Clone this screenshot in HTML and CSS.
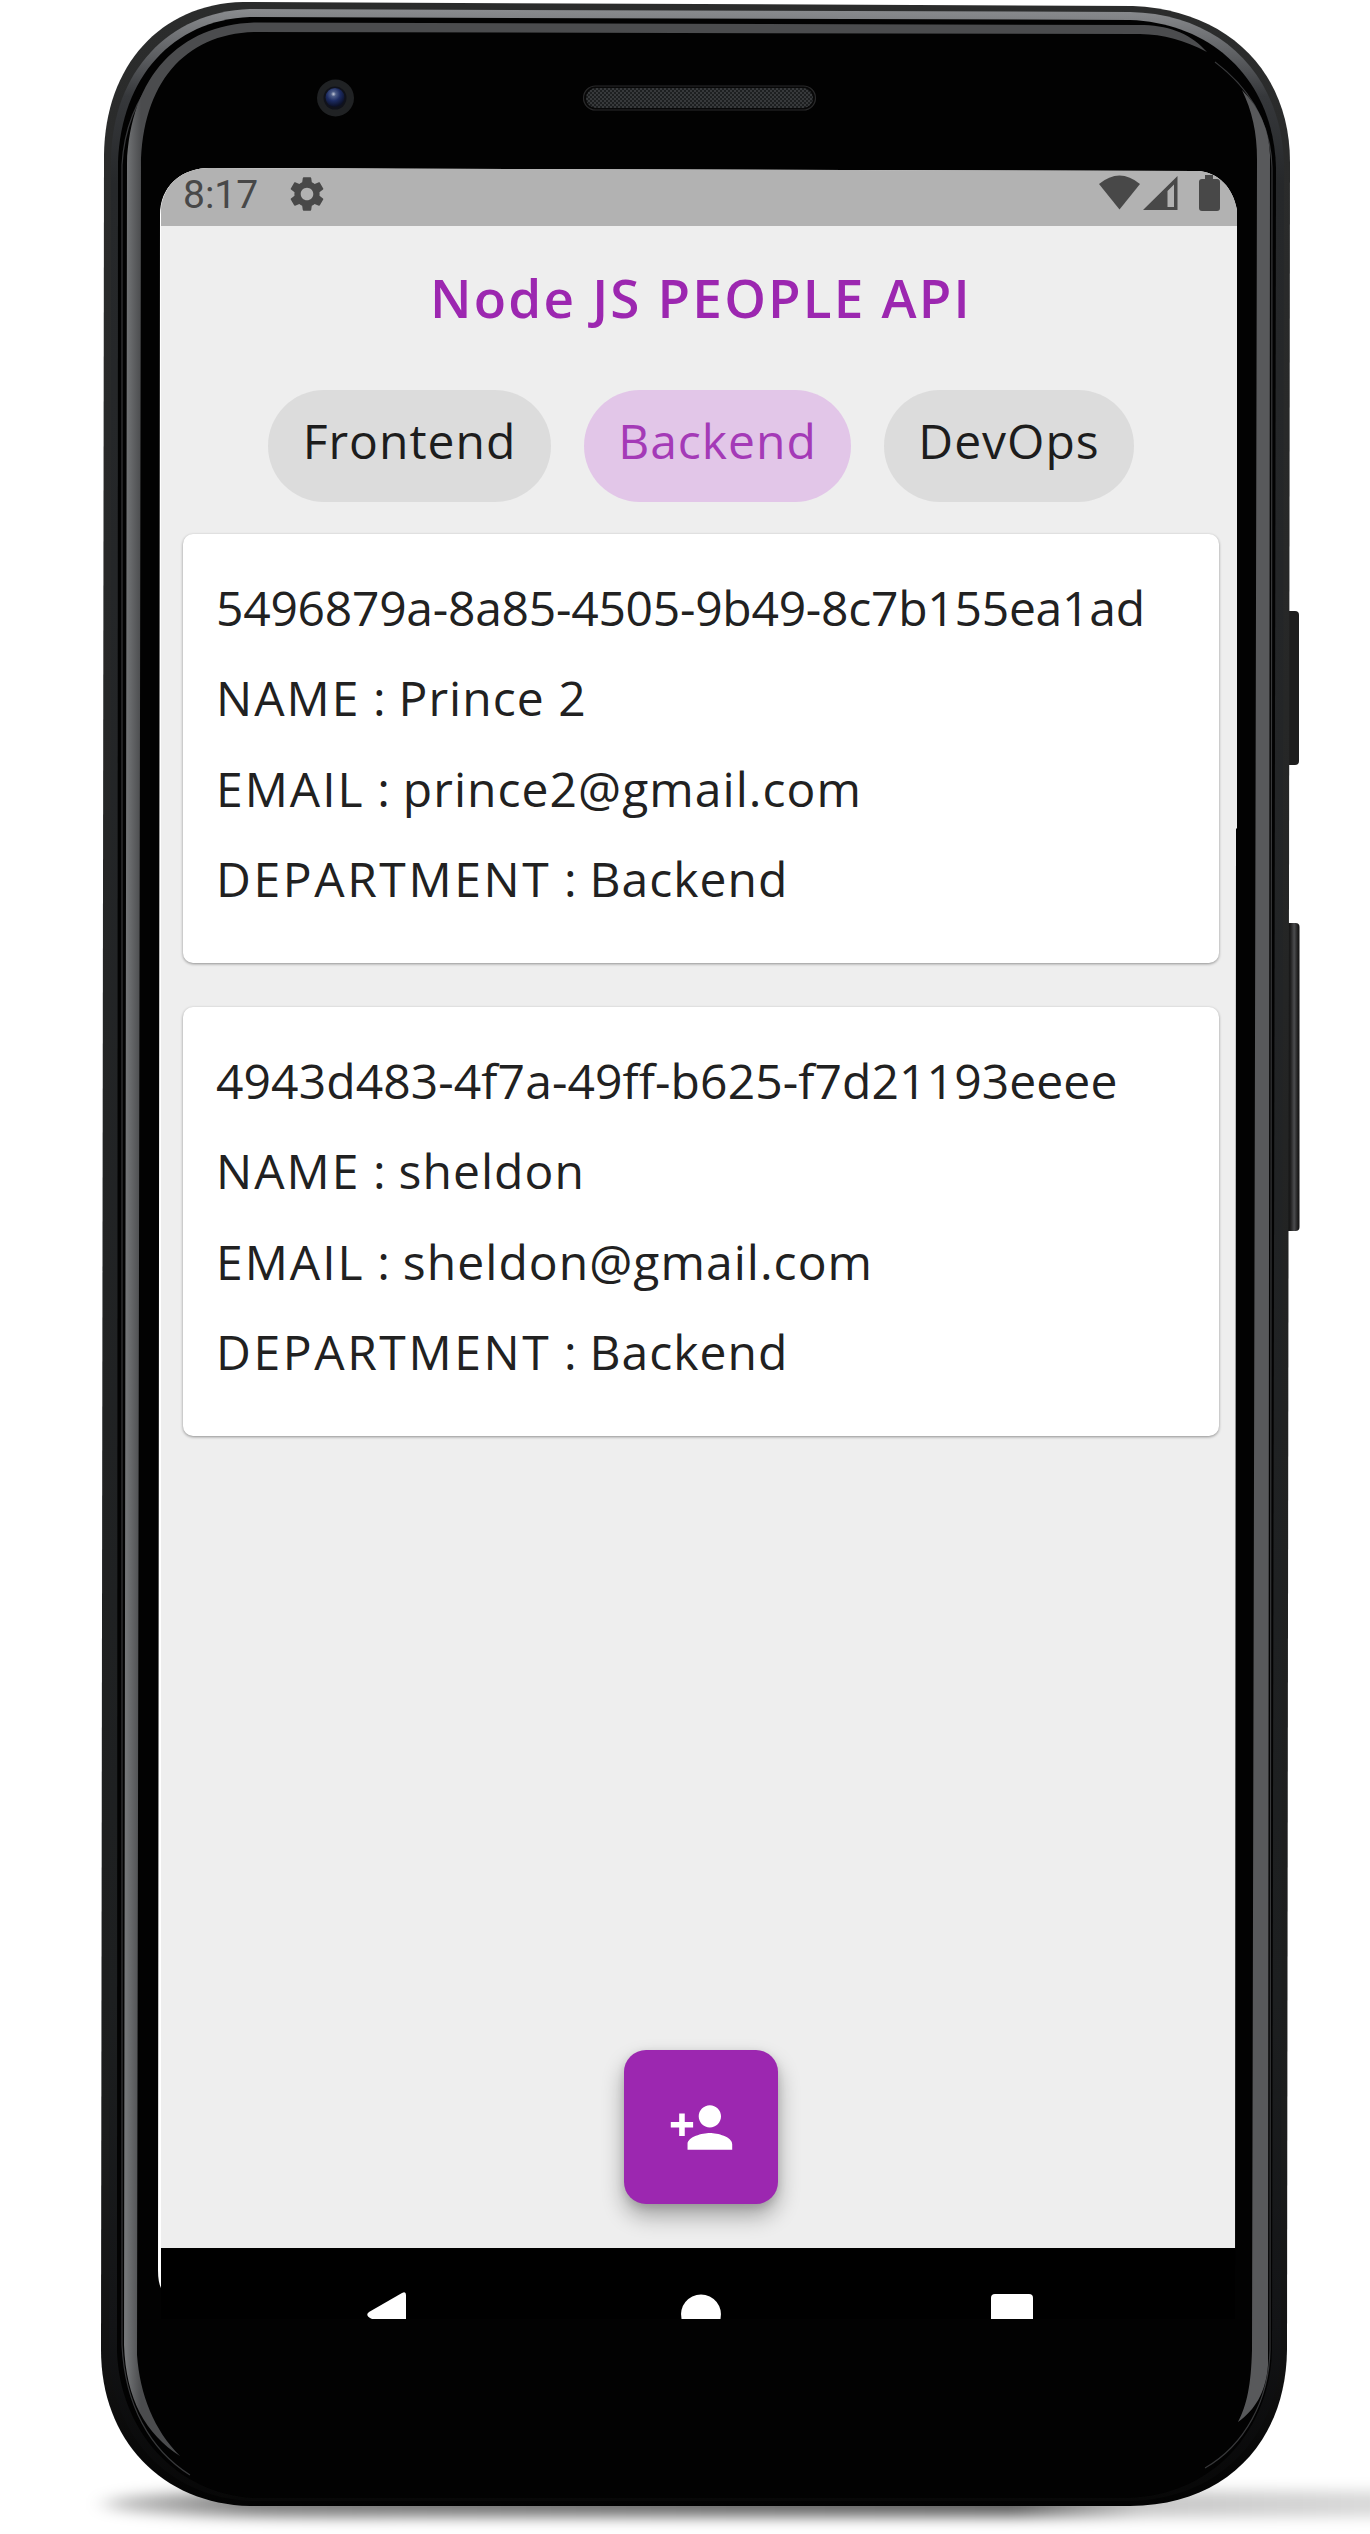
FILE: index.html
```html
<!DOCTYPE html>
<html lang="en">
<head>
<meta charset="utf-8">
<title>Node JS People API</title>
<link rel="stylesheet" href="styles.css">
</head>
<body>
<div class="stage">
  <svg class="device" viewBox="0 0 1370 2534" aria-hidden="true">
    <defs>
      <linearGradient id="rim" x1="0" y1="9" x2="0" y2="2500" gradientUnits="userSpaceOnUse">
        <stop offset="0" stop-color="#8a8c8f"/><stop offset=".012" stop-color="#6d6f72"/><stop offset=".035" stop-color="#36383b"/><stop offset=".07" stop-color="#26282a"/><stop offset=".8" stop-color="#1d1f20"/><stop offset=".93" stop-color="#131416"/><stop offset="1" stop-color="#070707"/>
      </linearGradient>
      <linearGradient id="shell" x1="0" y1="0" x2="0" y2="2506" gradientUnits="userSpaceOnUse">
        <stop offset="0" stop-color="#2b2c2c"/><stop offset=".85" stop-color="#1c1d1d"/><stop offset=".95" stop-color="#101010"/><stop offset="1" stop-color="#020202"/>
      </linearGradient>
      <linearGradient id="edge" x1="126" y1="0" x2="141" y2="0" gradientUnits="userSpaceOnUse">
        <stop offset="0" stop-color="#747678"/><stop offset="1" stop-color="#4b4c4e"/>
      </linearGradient>
      <linearGradient id="key" x1="1287" y1="0" x2="1299" y2="0" gradientUnits="userSpaceOnUse">
        <stop offset="0" stop-color="#080808"/><stop offset=".3" stop-color="#202020"/><stop offset=".6" stop-color="#4b4c4e"/><stop offset=".85" stop-color="#252525"/><stop offset="1" stop-color="#151515"/>
      </linearGradient>
      <radialGradient id="lens" cx=".42" cy=".32" r=".65">
        <stop offset="0" stop-color="#c5cad8"/><stop offset=".2" stop-color="#4c5c87"/><stop offset=".55" stop-color="#1c2b62"/><stop offset="1" stop-color="#0c1128"/>
      </radialGradient>
      <linearGradient id="ground" x1="100" y1="0" x2="1370" y2="0" gradientUnits="userSpaceOnUse">
        <stop offset="0" stop-color="#000" stop-opacity=".22"/><stop offset=".12" stop-color="#000" stop-opacity=".5"/><stop offset=".72" stop-color="#000" stop-opacity=".62"/><stop offset=".82" stop-color="#000" stop-opacity=".22"/><stop offset="1" stop-color="#000" stop-opacity=".15"/>
      </linearGradient>
      <filter id="soft" x="-5%" y="-150%" width="110%" height="400%"><feGaussianBlur stdDeviation="10 7"/></filter>
      <pattern id="mesh" width="4" height="4" patternUnits="userSpaceOnUse"><path d="M0 0h2v2H0zM2 2h2v2H2z" fill="#37393b"/></pattern>
    </defs>
    <path d="M102 2504Q115 2491 300 2491H1400V2517H400Q120 2519 102 2504Z" fill="url(#ground)" filter="url(#soft)"/>
    <rect x="1284" y="611" width="15" height="154" rx="4" fill="#1d1d1d"/>
    <rect x="1284" y="923" width="15.500" height="308" rx="4" fill="url(#key)"/>
    <path d="M243 2L1133 6C1228 10 1290 72 1290 162L1287 2350C1286 2440 1228 2505 1130 2506H250C162 2504 101 2440 101 2350L104 155C105 66 160 4 243 2Z" fill="url(#shell)"/>
    <path d="M250 9L1130 12C1222 14 1282 76 1284 165L1281 2350C1279 2435 1220 2500 1128 2501H252C168 2498 110 2435 109 2350L111 158C113 72 168 12 250 9Z" fill="url(#rim)"/>
    <path d="M250 17L1130 20C1214 23 1274 82 1276 168L1272 2350C1270 2428 1215 2496 1126 2498H254C176 2494 119 2430 117 2350L118 162C121 78 172 20 250 17Z" fill="#020202"/>
    <path d="M122 2345V165C124 130 135 100 158 74M1215 62C1252 90 1271 125 1272 168L1270 2350C1269 2400 1245 2445 1205 2468M122 2345C125 2405 150 2450 190 2475" fill="none" stroke="#37383a" stroke-width="1.200"/>
    <path d="M124 2345L127 164C130 76 180 25 254 22.500L1144 25C1172 26 1192 35 1207 52C1184 40 1164 34.500 1140 34L254 32C184 34 142 84 141 166L137 2355C140 2395 154 2430 180 2456C146 2434 126 2400 124 2345Z" fill="url(#edge)"/>
    <path d="M1242 90C1260 108 1269 130 1270 155L1268 2365C1266 2392 1255 2410 1238 2422C1247 2405 1251 2385 1252 2350L1257 160C1257 132 1252 111 1242 90Z" fill="#58595b"/>
    <path d="M160 215C160 187 180 168 212 168L400 169V2248H161V2288Q158 2282 158 2270Z" fill="#fff"/>
    <circle cx="335.500" cy="98" r="18.500" fill="#202224"/>
    <circle cx="335" cy="98" r="11.500" fill="#10121b"/>
    <circle cx="335" cy="97.500" r="9.500" fill="url(#lens)"/>
    <rect x="583.500" y="86" width="232" height="24" rx="12" fill="#080808" stroke="#29292a" stroke-width="1.200"/>
    <rect x="586" y="88" width="227" height="20" rx="10" fill="#1d1f20"/>
    <rect x="586" y="88" width="227" height="20" rx="10" fill="url(#mesh)"/>
  </svg>

  <main class="screen">
    <header class="status">
      <span class="clock">8:17</span>
      <svg class="gear" viewBox="0 0 24 24"><path d="M19.140 12.940c.04-.3.060-.61.060-.94 0-.32-.02-.64-.07-.94l2.030-1.580c.18-.14.230-.41.120-.61l-1.920-3.320c-.12-.22-.37-.29-.59-.22l-2.390.960c-.5-.38-1.030-.7-1.620-.94L14.400 2.810c-.04-.24-.24-.41-.48-.41h-3.840c-.24 0-.43.170-.47.410L9.250 5.350c-.59.240-1.130.570-1.620.940l-2.390-.96c-.22-.08-.47 0-.59.220L2.740 8.870c-.12.210-.08.470.120.610l2.030 1.580c-.05.3-.09.630-.09.940s.020.640.070.940l-2.030 1.580c-.18.140-.23.410-.12.610l1.920 3.320c.12.220.370.290.590.220l2.390-.96c.5.380 1.030.7 1.620.940l.36 2.540c.05.240.240.410.480.410h3.840c.24 0 .44-.17.470-.41l.36-2.540c.59-.24 1.130-.56 1.620-.94l2.390.960c.22.080.470 0 .59-.22l1.920-3.320c.12-.22.070-.47-.12-.61l-2.010-1.580zM12 15.600c-1.980 0-3.600-1.620-3.600-3.600s1.620-3.600 3.600-3.600 3.600 1.620 3.600 3.600-1.620 3.600-3.600 3.600z"/></svg>
      <svg class="signals" viewBox="0 0 121 37">
        <path d="M0 9Q20.500-8 41 9L20.500 34.500Z"/>
        <path fill-rule="evenodd" d="M44 35L78.500 1V35ZM68.500 16V32H75V9.500Z"/>
        <path d="M106 0h8v4h4q3 0 3 3v26q0 3-3 3h-15q-3 0-3-3V7q0-3 3-3h3Z"/>
      </svg>
    </header>

    <h1 class="title">Node JS PEOPLE API</h1>

    <nav class="chips">
      <button class="chip front">Frontend</button>
      <button class="chip back selected">Backend</button>
      <button class="chip ops">DevOps</button>
    </nav>

    <section class="people">
      <article class="card">
        <p class="uid">5496879a-8a85-4505-9b49-8c7b155ea1ad</p>
        <p><span class="label">NAME</span> : <span class="value">Prince 2</span></p>
        <p><span class="label">EMAIL</span> : <span class="value">prince2@gmail.com</span></p>
        <p><span class="label dept">DEPARTMENT</span> : <span class="value">Backend</span></p>
      </article>
      <article class="card">
        <p class="uid wide">4943d483-4f7a-49ff-b625-f7d21193eeee</p>
        <p><span class="label">NAME</span> : <span class="value">sheldon</span></p>
        <p><span class="label">EMAIL</span> : <span class="value">sheldon@gmail.com</span></p>
        <p><span class="label dept">DEPARTMENT</span> : <span class="value">Backend</span></p>
      </article>
    </section>

    <button class="fab" aria-label="Add person">
      <svg viewBox="0 0 24 24"><path d="M15 12c2.210 0 4-1.790 4-4s-1.790-4-4-4-4 1.790-4 4 1.790 4 4 4zm-9-2V7H4v3H1v2h3v3h2v-3h3v-2H6zm9 4c-2.670 0-8 1.340-8 4v2h16v-2c0-2.660-5.330-4-8-4z"/></svg>
    </button>

    <footer class="navbar">
      <svg viewBox="0 0 1076 71">
        <path d="M245 71V47Q245 43 241 45L208 64Q204 67 209 70L211 71Z"/>
        <path d="M520.500 71A20 20 0 1 1 559.500 71Z"/>
        <path d="M830 71V50Q830 46 834 46H868Q872 46 872 50V71Z"/>
      </svg>
    </footer>
  </main>
</div>
</body>
</html>
```

FILE: styles.css
```css
* {
  box-sizing: border-box;
}

body {
  margin: 0;
  background: #fff;
  font-family: "Open Sans", "Noto Sans", sans-serif;
  color: #212121;
}

.stage {
  position: relative;
  width: 1370px;
  height: 2534px;
  padding: 168px 0 0 161px;
  overflow: hidden;
}

.device {
  position: absolute;
  inset: 0;
  width: 1370px;
  height: 2534px;
}

.screen {
  position: relative;
  display: flex;
  flex-direction: column;
  width: 1076px;
  height: 2151px;
  background: linear-gradient(#eee 2080px, #000 2080px);
  clip-path: path("M0 40C3 16 22 0 48 0L1036 3C1058 4 1072 20 1076 42V660L1075 661L1074 2151H0Z");
}

.status {
  display: flex;
  align-items: flex-start;
  height: 58px;
  padding: 8px 17px 0 22px;
  background: #b2b2b2;
  fill: #484848;
}

.clock {
  width: 103px;
  font: 39px/38px Roboto, sans-serif;
  color: #484848;
}

.gear {
  width: 42px;
  height: 42px;
  margin-top: -3px;
}

.signals {
  width: 121px;
  height: 37px;
  margin: -1px 0 0 auto;
}

.title {
  height: 163.5px;
  margin: 0;
  padding-left: 4px;
  font-size: 53px;
  font-weight: 600;
  line-height: 143px;
  letter-spacing: 2.2px;
  text-align: center;
  color: #9c27b0;
}

.chips {
  display: flex;
  justify-content: center;
  gap: 33px;
  height: 144px;
  padding-left: 4px;
}

.chip {
  height: 112.5px;
  padding: 0 0 11px;
  border: 0;
  border-radius: 57px;
  background: #dcdcdc;
  font: 48px/101px "Open Sans", sans-serif;
  letter-spacing: 1px;
  text-align: center;
  color: #1d1d1d;
}

.front {
  width: 283px;
}

.back {
  width: 267px;
}

.ops {
  width: 250px;
}

.selected {
  background: #e2c6e8;
  color: #a43ab7;
}

.people {
  display: flex;
  flex-direction: column;
  gap: 43.5px;
  padding: 0 18px 0 22px;
}

.card {
  height: 429.5px;
  padding: 29px 0 0 33px;
  border-radius: 10px;
  background: #fff;
  box-shadow: 0 1px 3px rgba(0, 0, 0, .4);
}

.card p {
  margin: 0;
  font-size: 48px;
  line-height: 90.6px;
  letter-spacing: .2px;
  white-space: nowrap;
}

.card .uid {
  letter-spacing: -.25px;
}

.card .wide {
  letter-spacing: .1px;
}

.label {
  letter-spacing: 2px;
}

.dept {
  letter-spacing: 2.6px;
}

.value {
  letter-spacing: 1.05px;
}

.fab {
  display: grid;
  place-items: center;
  width: 154px;
  height: 154px;
  margin: auto 459px 44px 463px;
  padding: 0;
  border: 0;
  border-radius: 22px;
  background: #9c27b0;
  box-shadow: 0 12px 22px rgba(0, 0, 0, .32), 0 3px 8px rgba(0, 0, 0, .12);
}

.fab svg {
  width: 67px;
  height: 67px;
  fill: #fff;
}

.navbar {
  height: 71px;
  background: #000;
}

.navbar svg {
  display: block;
  width: 1076px;
  height: 71px;
  fill: #fff;
}
```
